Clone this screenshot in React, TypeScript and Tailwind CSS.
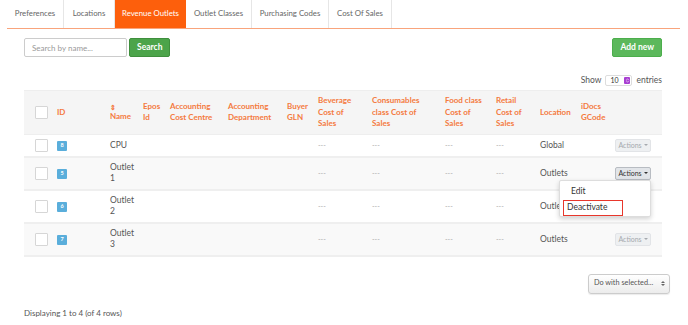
import { ChevronsUpDown } from "lucide-react";

const tabs = [
  { t: "Preferences", w: "w-[57px]" },
  { t: "Locations", w: "w-[51px]" },
  { t: "Revenue Outlets", w: "w-[71px]" },
  { t: "Outlet Classes", w: "w-[66px]" },
  { t: "Purchasing Codes", w: "w-[77px]" },
  { t: "Cost Of Sales", w: "w-[63px]" },
];

const cols = "grid grid-cols-[33px_53px_33px_27px_58px_59px_31px_54px_73px_51px_44px_41px_34px_47px]";

const rows = [
  { id: 8, name: ["CPU"], location: "Global", h: "h-[23px]", bg: "bg-white", actions: "faded" },
  { id: 5, name: ["Outlet", "1"], location: "Outlets", h: "h-[33px]", bg: "bg-[#f9f9f9]", actions: "open" },
  { id: 6, name: ["Outlet", "2"], location: "Outlets", h: "h-[33px]", bg: "bg-white", actions: "hidden" },
  { id: 7, name: ["Outlet", "3"], location: "Outlets", h: "h-[33px]", bg: "bg-[#f9f9f9]", actions: "faded" },
];

function Checkbox() {
  return <div className="w-[13px] h-[13px] border border-[#d6d6d6] bg-white rounded-[1px] ml-[11px]" />;
}

function ActionsButton({ active }: { active?: boolean }) {
  return (
    <div
      className={
        active
          ? "flex items-center gap-[2px] h-[13px] w-[36px] justify-center rounded-[2px] border border-[#b8bcc2] bg-[#e2e5e9] text-[7px] text-[#333]"
          : "flex items-center gap-[2px] h-[13px] w-[36px] justify-center rounded-[2px] border border-[#e2e4e7] bg-[#eef0f2] text-[7px] text-[#a5a9ae]"
      }
    >
      Actions
      <span className="w-0 h-0 border-x-[2px] border-x-transparent border-t-[2.5px] border-t-current" />
    </div>
  );
}

export default function App() {
  return (
    <div className="w-[688px] h-[325px] bg-white font-['Lato',sans-serif] text-[#555] relative overflow-hidden">
      <div className="mx-[7px] w-[673px] flex border-b-[1.5px] border-[#f9a47c] h-[29px]">
        {tabs.map(({ t, w }) => (
          <div
            key={t}
            className={
              t === "Revenue Outlets"
                ? `${w} flex items-center justify-center whitespace-nowrap text-[7.8px] bg-[#fd5f0c] text-white`
                : `${w} flex items-center justify-center whitespace-nowrap text-[7.8px] text-[#666] border-r border-[#e6e6e6]`
            }
          >
            {t}
          </div>
        ))}
      </div>

      <div className="flex items-center justify-between mt-[9px] ml-[24px] w-[638px]">
        <div className="flex items-center gap-[2px]">
          <div className="w-[103px] h-[19px] border border-[#ccc] rounded-[2px] flex items-center px-[7px] text-[8px] text-[#999]">
            Search by name...
          </div>
          <div className="h-[19px] px-[7px] flex items-center rounded-[2px] bg-[#4ca44a] border border-[#3f8f3d] text-white text-[8.5px] font-bold">
            Search
          </div>
        </div>
        <div className="h-[19px] px-[7px] flex items-center rounded-[2px] bg-[#5cb85c] border border-[#4cae4c] text-white text-[8.5px] font-bold">
          Add new
        </div>
      </div>

      <div className="flex items-center justify-end gap-[4px] mt-[17px] mr-[26px] text-[8.5px] text-[#555]">
        <span>Show</span>
        <div className="w-[27px] h-[11px] border border-[#ddd] rounded-[2px] flex items-center justify-between pl-[4px] pr-[1px] text-[7px] text-[#333]">
          10
          <span className="w-[6px] h-[7px] rounded-[1px] bg-[#a83fd2] flex items-center justify-center">
            <ChevronsUpDown className="w-[5px] h-[5px] text-white" strokeWidth={3} />
          </span>
        </div>
        <span>entries</span>
      </div>

      <div className="ml-[24px] w-[638px] mt-[3px]">
        <div className={`${cols} h-[45px] bg-[#f5f5f5] items-center text-[8px] font-bold text-[#f47a3e] leading-[11.5px] border-y border-[#eee]`}>
          <Checkbox />
          <div>ID</div>
          <div className="flex flex-col">
            <span className="text-[7px] leading-[8px]">⇕</span>
            <span>Name</span>
          </div>
          <div>Epos<br />Id</div>
          <div>Accounting<br />Cost Centre</div>
          <div>Accounting<br />Department</div>
          <div>Buyer<br />GLN</div>
          <div>Beverage<br />Cost of<br />Sales</div>
          <div>Consumables<br />class Cost of<br />Sales</div>
          <div>Food class<br />Cost of<br />Sales</div>
          <div>Retail<br />Cost of<br />Sales</div>
          <div>Location</div>
          <div>iDocs<br />GCode</div>
          <div />
        </div>

        {rows.map((r) => (
          <div key={r.id} className={`${cols} ${r.h} ${r.bg} items-center text-[8.5px] leading-[11.5px] border-b-2 border-[#efefef]`}>
            <Checkbox />
            <div>
              <span className="inline-flex w-[10px] h-[10px] rounded-[1px] bg-[#5aaedb] text-white text-[5.5px] font-bold items-center justify-center">
                {r.id}
              </span>
            </div>
            <div className="flex flex-col">
              {r.name.map((n) => (
                <span key={n}>{n}</span>
              ))}
            </div>
            <div />
            <div />
            <div />
            <div />
            <div className="text-[#aaa] text-[7px]">---</div>
            <div className="text-[#aaa] text-[7px]">---</div>
            <div className="text-[#aaa] text-[7px]">---</div>
            <div className="text-[#aaa] text-[7px]">---</div>
            <div>{r.location}</div>
            <div />
            <div className="relative">
              {r.actions === "faded" && <ActionsButton />}
              {r.actions === "open" && (
                <>
                  <ActionsButton active />
                  <div className="absolute right-[11px] top-[13px] w-[92px] h-[37px] bg-white border border-[#ddd] rounded-[2px] shadow-[0_2px_5px_rgba(0,0,0,0.18)] z-10 text-[8.5px] text-[#333] pt-[4px]">
                    <div className="pl-[11px] h-[13px] flex items-center">Edit</div>
                    <div className="ml-[3px] mt-[2px] w-[60px] h-[16px] border-[1.5px] border-[#e8372c] flex items-center pl-[3px]">
                      Deactivate
                    </div>
                  </div>
                </>
              )}
            </div>
          </div>
        ))}
      </div>

      <div className="flex justify-end mr-[18px] mt-[17px]">
        <div className="w-[82px] h-[20px] rounded-[3px] border border-[#ccc] bg-gradient-to-b from-white to-[#ececec] flex items-center justify-between pl-[5px] pr-[4px] whitespace-nowrap text-[7.3px] text-[#555] shadow-[0_1px_1px_rgba(0,0,0,0.08)]">
          Do with selected...
          <span className="flex flex-col items-center gap-[1px]">
            <span className="w-0 h-0 border-x-[2px] border-x-transparent border-b-[2.5px] border-b-[#666]" />
            <span className="w-0 h-0 border-x-[2px] border-x-transparent border-t-[2.5px] border-t-[#666]" />
          </span>
        </div>
      </div>

      <div className="ml-[24px] mt-[13px] text-[8px] text-[#555]">Displaying 1 to 4 (of 4 rows)</div>
    </div>
  );
}
